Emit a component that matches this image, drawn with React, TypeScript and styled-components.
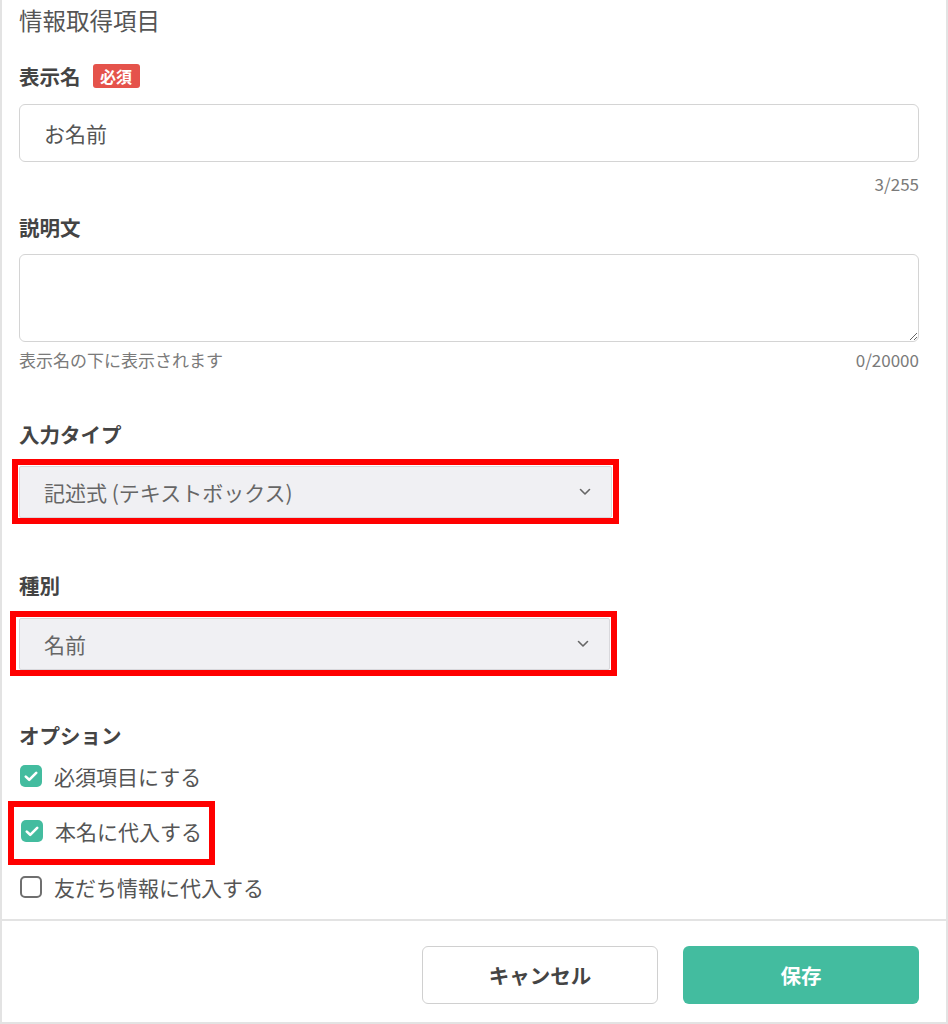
import React from "react";
import styled, { createGlobalStyle } from "styled-components";

const Global = createGlobalStyle`
  html, body { margin: 0; padding: 0; background: #fff; }
  body { font-family: "Noto Sans CJK JP", "Noto Sans", sans-serif; }
  * { box-sizing: border-box; }
`;

const Frame = styled.div`
  width: 948px;
  height: 1024px;
  border-left: 2px solid #e3e3e3;
  border-right: 2px solid #e3e3e3;
  border-bottom: 2px solid #e3e3e3;
  display: flex;
  flex-direction: column;
  overflow: hidden;
`;

const Body = styled.div`
  padding: 0 27px 18px 17px;
  display: flex;
  flex-direction: column;
`;

const Title = styled.div`
  font-size: 23.5px;
  line-height: 40px;
  color: #555;
`;

const LabelRow = styled.div<{ $mt: number }>`
  margin-top: ${(p) => p.$mt}px;
  display: flex;
  align-items: center;
  gap: 12px;
  height: 24px;
`;

const Label = styled.span`
  font-size: 20.5px;
  font-weight: 700;
  line-height: 24px;
  color: #444;
`;

const Badge = styled.span`
  display: inline-flex;
  align-items: center;
  justify-content: center;
  width: 47px;
  height: 24px;
  border-radius: 3px;
  background: #e5534b;
  color: #fff;
  font-size: 16px;
  font-weight: 700;
`;

const TextInput = styled.input`
  margin-top: 16px;
  width: 100%;
  height: 58px;
  border: 1.5px solid #d4d4d4;
  border-radius: 6px;
  padding: 0 24px;
  font-family: inherit;
  font-size: 21px;
  color: #555;
  outline: none;
`;

const TextArea = styled.textarea`
  margin-top: 15px;
  width: 100%;
  height: 88px;
  border: 1.5px solid #d4d4d4;
  border-radius: 6px;
  padding: 12px 24px;
  font-family: inherit;
  font-size: 21px;
  color: #555;
  outline: none;
  display: block;
`;

const MetaRow = styled.div<{ $mt: number; $end?: boolean }>`
  margin-top: ${(p) => p.$mt}px;
  display: flex;
  justify-content: ${(p) => (p.$end ? "flex-end" : "space-between")};
  font-size: 17px;
  line-height: 24px;
  color: #7a7a7a;
`;

const Highlight = styled.div<{ $mt: number; $ml: number; $pl: number }>`
  margin-top: ${(p) => p.$mt}px;
  margin-left: ${(p) => p.$ml}px;
  width: 607px;
  border: 6px solid #ff0000;
  padding: 1px 1px 0 ${(p) => p.$pl}px;
`;

const SelectBox = styled.div`
  height: 52px;
  background: #f0f0f3;
  border: 1px solid #d8d8dc;
  border-radius: 2px;
  display: flex;
  align-items: center;
  justify-content: space-between;
  padding: 0 20px 0 24px;
  font-size: 21px;
  color: #666;
`;

const OptionRow = styled.label<{ $mt?: number }>`
  margin-top: ${(p) => p.$mt ?? 0}px;
  display: flex;
  align-items: center;
  gap: 12px;
  height: 28px;
  font-size: 21px;
  color: #555;
  padding-left: 1px;
`;

const OptionHighlight = styled.div`
  margin-top: 11px;
  margin-left: -11px;
  width: 207px;
  border: 6px solid #ff0000;
  padding: 10px 0 14px 6px;
`;

const Box = styled.span<{ $on: boolean }>`
  width: 22px;
  height: 22px;
  border-radius: 5px;
  flex: none;
  display: inline-flex;
  align-items: center;
  justify-content: center;
  background: ${(p) => (p.$on ? "#43bc9f" : "#fff")};
  border: ${(p) => (p.$on ? "none" : "2px solid #6f6f6f")};
`;

const Footer = styled.div`
  border-top: 2px solid #e3e3e3;
  padding: 25px 27px 0 0;
  display: flex;
  justify-content: flex-end;
  gap: 25px;
`;

const Button = styled.button<{ $primary?: boolean }>`
  width: 236px;
  height: 58px;
  border-radius: 6px;
  font-family: inherit;
  font-size: 20.5px;
  font-weight: 700;
  cursor: pointer;
  color: ${(p) => (p.$primary ? "#fff" : "#444")};
  background: ${(p) => (p.$primary ? "#43bc9f" : "#fff")};
  border: ${(p) => (p.$primary ? "none" : "1.5px solid #d0d0d0")};
`;

const Chevron = () => (
  <svg width="12" height="8" viewBox="0 0 12 8">
    <path d="M1.5 1.5 L6 6 L10.5 1.5" fill="none" stroke="#666" strokeWidth="1.6" strokeLinecap="round" strokeLinejoin="round" />
  </svg>
);

const Check = () => (
  <svg width="14" height="11" viewBox="0 0 14 11">
    <path d="M1.8 5.6 L5.2 8.8 L12.2 1.8" fill="none" stroke="#fff" strokeWidth="2.6" strokeLinecap="round" strokeLinejoin="round" />
  </svg>
);

const Checkbox = ({ on }: { on: boolean }) => <Box $on={on}>{on && <Check />}</Box>;

export default function App() {
  return (
    <>
      <Global />
      <Frame>
        <Body>
          <Title>情報取得項目</Title>

          <LabelRow $mt={24}>
            <Label>表示名</Label>
            <Badge>必須</Badge>
          </LabelRow>
          <TextInput defaultValue="お名前" />
          <MetaRow $mt={10} $end>
            <span>3/255</span>
          </MetaRow>

          <LabelRow $mt={19}>
            <Label>説明文</Label>
          </LabelRow>
          <TextArea />
          <MetaRow $mt={6}>
            <span>表示名の下に表示されます</span>
            <span>0/20000</span>
          </MetaRow>

          <LabelRow $mt={50}>
            <Label>入力タイプ</Label>
          </LabelRow>
          <Highlight $mt={13} $ml={-7} $pl={1}>
            <SelectBox>
              <span>記述式 (テキストボックス)</span>
              <Chevron />
            </SelectBox>
          </Highlight>

          <LabelRow $mt={49}>
            <Label>種別</Label>
          </LabelRow>
          <Highlight $mt={14} $ml={-9} $pl={3}>
            <SelectBox>
              <span>名前</span>
              <Chevron />
            </SelectBox>
          </Highlight>

          <LabelRow $mt={47}>
            <Label>オプション</Label>
          </LabelRow>
          <OptionRow $mt={15}>
            <Checkbox on />
            必須項目にする
          </OptionRow>
          <OptionHighlight>
            <OptionRow>
              <Checkbox on />
              本名に代入する
            </OptionRow>
          </OptionHighlight>
          <OptionRow $mt={8}>
            <Checkbox on={false} />
            友だち情報に代入する
          </OptionRow>
        </Body>
        <Footer>
          <Button>キャンセル</Button>
          <Button $primary>保存</Button>
        </Footer>
      </Frame>
    </>
  );
}
